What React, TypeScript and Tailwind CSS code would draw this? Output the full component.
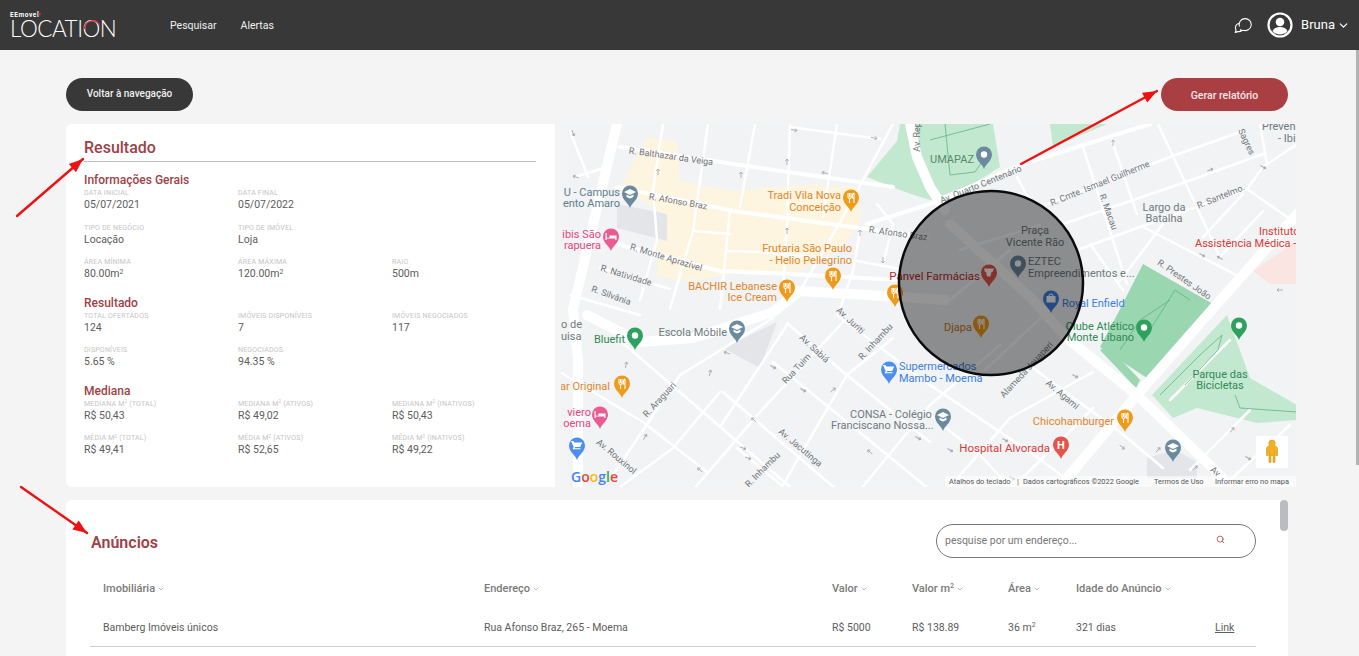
import { ChevronDown, Search } from "lucide-react";

// ---------- Map data (screen coordinates, the svg viewBox starts at 561,124) ----------

const YELLOW =
  "647,137 677,141 680,181 733,191 810,184 860,187 860,221 843,247 800,271 733,274 693,281 657,277 657,207 620,191 627,174";

const GREENS = [
  "1143,264 1213,304 1210,305 1147,378 1100,347 1117,315",
  "1100,350 1108,346 1140,380 1136,388",
];
const LIGHT_GREENS = [
  "930,124 993,124 1000,167 973,184 930,200 905,192 867,177 897,141 900,124",
  "1050,124 1107,124 1053,147",
  "1227,315 1250,378 1297,405 1297,420 1257,423 1197,408 1173,418 1152,395",
];
const BLOCKS = [
  "617,204 667,214 667,241 617,228",
  "723,348 777,322 760,368",
  "1147,458 1175,450 1197,462 1197,478 1147,478",
];

const THICK = [
  "617,124 573,309 578,360 578,487",
  "910,124 917,157 930,187 945,210",
  "587,315 640,342 693,338 773,312 800,291 900,297 945,300",
  "1297,214 1217,304 1137,395 1067,478",
  "950,224 1030,297 1067,338 1137,395 1223,478",
];
const MEDIUM = [
  "1150,124 1023,164 930,204 867,224",
  "617,187 733,211 927,237",
  "620,147 747,166 893,187",
  "617,244 720,271 790,274 900,280",
];
const THIN = [
  "663,124 653,190 657,240 640,300",
  "708,124 693,231 670,309",
  "570,131 588,177",
  "575,177 607,167",
  "755,124 740,207",
  "790,124 787,224 783,290",
  "837,124 823,217",
  "893,124 843,217 800,291",
  "730,211 720,309",
  "693,231 730,234",
  "727,251 760,252 857,261 900,269",
  "600,268 670,289",
  "570,295 640,315",
  "860,231 853,271 840,309",
  "877,204 893,224 883,264",
  "790,127 880,139",
  "1047,204 1170,157 1240,132",
  "1063,224 1180,184 1263,154",
  "1080,249 1140,227 1247,189 1263,167",
  "1083,147 1127,284",
  "1112,141 1137,214",
  "1158,124 1220,257",
  "1017,177 1030,201",
  "1247,189 1297,224",
  "1263,167 1297,144",
  "1260,124 1267,164",
  "1143,227 1240,277",
  "1163,224 1120,281",
  "1243,194 1203,237",
  "1263,211 1220,257",
  "1090,244 1123,290",
  "617,338 703,412 790,487",
  "560,372 643,422 707,472",
  "773,362 847,422 930,490",
  "787,323 843,372 930,442",
  "837,315 930,385 1030,452 1077,487",
  "723,392 837,490",
  "1033,368 1120,432 1163,468",
  "930,415 980,455 1013,490",
  "737,448 787,490",
  "613,475 680,375 773,318",
  "620,487 673,448 720,392",
  "720,427 787,325",
  "693,490 760,412 843,322",
  "780,490 847,375 893,338",
  "860,490 930,405 1000,345",
  "947,490 1010,418 1093,372",
  "1010,490 1063,438 1093,408",
  "960,250 1040,225",
  "950,300 1010,250",
  "985,370 1060,300",
  "1170,400 1230,340",
  "1190,470 1250,410",
  "1230,480 1290,425",
];
const TRAILS = [
  "930,140 960,132 990,124",
  "945,124 950,175 975,172 990,150",
  "1120,350 1140,320 1170,300",
  "1150,330 1175,290 1190,300",
  "1160,395 1200,355 1222,335 1218,350 1185,385",
  "1235,395 1240,408 1297,412",
];
const ONE_WAYS: [number, number, number][] = [
  [573, 133, 70], [576, 177, 200], [658, 172, 270], [741, 175, 270], [787, 162, 270],
  [825, 173, 190], [794, 130, 10], [874, 138, 10], [787, 231, 270], [860, 233, 270],
  [883, 260, 90], [1113, 143, 270], [1210, 170, 340], [1263, 167, 30], [1202, 255, 30],
  [1220, 258, 210], [1280, 290, 180], [626, 365, 280], [727, 353, 200], [773, 367, 30],
  [803, 390, 30], [833, 390, 320], [710, 373, 280], [754, 420, 220], [743, 448, 20],
  [748, 458, 20], [645, 437, 300], [700, 470, 220], [1005, 440, 30], [1075, 376, 30],
  [1122, 447, 40], [1158, 450, 310], [1195, 468, 320], [1232, 430, 310], [1248, 458, 30],
  [918, 438, 30], [870, 452, 220], [950, 450, 30], [1012, 478, 30],
];

type Label = { t: string; x: number; y: number; c: string; a?: "start" | "middle" | "end"; s?: number; r?: number };

const ORANGE = "#e0862b";
const STREET = "#6f7479";
const GRAY = "#70797f";
const GREEN = "#2f8a55";
const PINK = "#e8457f";
const BLUE = "#3b7de0";
const RED = "#d93a34";

const LABELS: Label[] = [
  { t: "Tradi Vila Nova", x: 841, y: 196, c: ORANGE, a: "end" },
  { t: "Conceição", x: 841, y: 208, c: ORANGE, a: "end" },
  { t: "U - Campus", x: 620, y: 193, c: "#5f7d8e", a: "end" },
  { t: "ento Amaro", x: 620, y: 204, c: "#5f7d8e", a: "end" },
  { t: "ibis São", x: 601, y: 235, c: PINK, a: "end" },
  { t: "rapuera", x: 601, y: 246, c: PINK, a: "end" },
  { t: "Frutaria São Paulo", x: 852, y: 249, c: ORANGE, a: "end" },
  { t: "- Helio Pellegrino", x: 852, y: 261, c: ORANGE, a: "end" },
  { t: "BACHIR Lebanese", x: 777, y: 287, c: ORANGE, a: "end" },
  { t: "Ice Cream", x: 777, y: 298, c: ORANGE, a: "end" },
  { t: "UMAPAZ", x: 974, y: 160, c: "#5a8a6a", a: "end" },
  { t: "Panvel Farmácias", x: 980, y: 277, c: "#c0272d", a: "end", s: 11.5 },
  { t: "Praça", x: 1035, y: 231, c: GRAY, a: "middle" },
  { t: "Vicente Rão", x: 1035, y: 243, c: GRAY, a: "middle" },
  { t: "EZTEC", x: 1028, y: 262, c: GRAY },
  { t: "Empreendimentos e...", x: 1028, y: 274, c: GRAY },
  { t: "Royal Enfield", x: 1062, y: 304, c: BLUE },
  { t: "Clube Atlético", x: 1134, y: 327, c: GREEN, a: "end" },
  { t: "Monte Líbano", x: 1134, y: 338, c: GREEN, a: "end" },
  { t: "Djapa", x: 972, y: 328, c: "#c8761f", a: "end" },
  { t: "Bluefit", x: 625, y: 340, c: GREEN, a: "end" },
  { t: "Escola Móbile", x: 727, y: 333, c: GRAY, a: "end" },
  { t: "o de", x: 561, y: 325, c: GRAY },
  { t: "uisa", x: 561, y: 337, c: GRAY },
  { t: "ar Original", x: 610, y: 387, c: ORANGE, a: "end" },
  { t: "viero", x: 591, y: 413, c: PINK, a: "end" },
  { t: "oema", x: 591, y: 424, c: PINK, a: "end" },
  { t: "Supermercados", x: 899, y: 367, c: BLUE },
  { t: "Mambo - Moema", x: 899, y: 379, c: BLUE },
  { t: "CONSA - Colégio", x: 850, y: 415, c: GRAY },
  { t: "Franciscano Nossa...", x: 831, y: 426, c: GRAY },
  { t: "Chicohamburger", x: 1114, y: 422, c: ORANGE, a: "end" },
  { t: "Hospital Alvorada", x: 1050, y: 449, c: RED, a: "end", s: 11.5 },
  { t: "Parque das", x: 1220, y: 375, c: GREEN, a: "middle" },
  { t: "Bicicletas", x: 1220, y: 386, c: GREEN, a: "middle" },
  { t: "Largo da", x: 1164, y: 208, c: GRAY, a: "middle" },
  { t: "Batalha", x: 1164, y: 219, c: GRAY, a: "middle" },
  { t: "Instituto", x: 1259, y: 232, c: RED },
  { t: "Assistência Médica -", x: 1195, y: 244, c: RED },
  { t: "Preven", x: 1262, y: 127, c: GRAY },
  { t: "- Ibi", x: 1278, y: 139, c: GRAY },
  // street names
  { t: "R. Balthazar da Veiga", x: 671, y: 157, c: STREET, a: "middle", s: 9, r: 8 },
  { t: "R. Afonso Braz", x: 678, y: 202, c: STREET, a: "middle", s: 9, r: 10 },
  { t: "R. Afonso Braz", x: 898, y: 234, c: STREET, a: "middle", s: 9, r: 8 },
  { t: "R. Monte Aprazível", x: 666, y: 258, c: STREET, a: "middle", s: 9, r: 17 },
  { t: "R. Natividade", x: 626, y: 276, c: STREET, a: "middle", s: 9, r: 17 },
  { t: "R. Silvânia", x: 611, y: 296, c: STREET, a: "middle", s: 9, r: 20 },
  { t: "Av. Rep", x: 918, y: 137, c: STREET, a: "middle", s: 9, r: -90 },
  { t: "Av. Quarto Centenário", x: 981, y: 185, c: STREET, a: "middle", s: 9, r: -22 },
  { t: "R. Cmte. Ismael Guilherme", x: 1100, y: 184, c: STREET, a: "middle", s: 9, r: -22 },
  { t: "Sagres", x: 1246, y: 142, c: STREET, a: "middle", s: 9, r: 65 },
  { t: "R. Macau", x: 1108, y: 212, c: STREET, a: "middle", s: 9, r: 70 },
  { t: "R. Santelmo.", x: 1221, y: 197, c: STREET, a: "middle", s: 9, r: -22 },
  { t: "R. Prestes João", x: 1184, y: 280, c: STREET, a: "middle", s: 9, r: 35 },
  { t: "Av. Juriti", x: 850, y: 321, c: STREET, a: "middle", s: 9, r: 43 },
  { t: "R. Inhambu", x: 876, y: 342, c: STREET, a: "middle", s: 9, r: -47 },
  { t: "Av. Sabiá", x: 814, y: 349, c: STREET, a: "middle", s: 9, r: 43 },
  { t: "Rua Tuim", x: 797, y: 369, c: STREET, a: "middle", s: 9, r: -47 },
  { t: "R. Araguari", x: 660, y: 400, c: STREET, a: "middle", s: 9, r: -47 },
  { t: "Av. Rouxinol", x: 616, y: 457, c: STREET, a: "middle", s: 9, r: 40 },
  { t: "Av. Jacutinga", x: 800, y: 448, c: STREET, a: "middle", s: 9, r: 40 },
  { t: "R. Inhambu", x: 763, y: 470, c: STREET, a: "middle", s: 9, r: -45 },
  { t: "Alameda Jauaperi", x: 1027, y: 370, c: STREET, a: "middle", s: 9, r: -47 },
  { t: "Av. Agami", x: 1062, y: 395, c: STREET, a: "middle", s: 9, r: 40 },
  { t: "Av", x: 1215, y: 472, c: STREET, a: "middle", s: 9, r: 40 },
];

type Glyph = "dot" | "fork" | "cap" | "bed" | "cart" | "bag" | "h" | "cup";

const PINS: { x: number; y: number; c: string; g: Glyph }[] = [
  { x: 851, y: 212, c: "#f09a1a", g: "fork" },
  { x: 984, y: 169, c: "#6b8a9e", g: "dot" },
  { x: 630, y: 208, c: "#6b8a9e", g: "cap" },
  { x: 611, y: 251, c: "#ec5a92", g: "bed" },
  { x: 833, y: 290, c: "#f09a1a", g: "fork" },
  { x: 787, y: 302, c: "#f09a1a", g: "fork" },
  { x: 895, y: 307, c: "#f09a1a", g: "fork" },
  { x: 989, y: 287, c: "#e5534b", g: "cup" },
  { x: 1018, y: 278, c: "#6b8a9e", g: "dot" },
  { x: 1051, y: 313, c: "#3f7fe6", g: "bag" },
  { x: 1144, y: 342, c: "#2ea15e", g: "dot" },
  { x: 1239, y: 340, c: "#2ea15e", g: "dot" },
  { x: 981, y: 338, c: "#f09a1a", g: "fork" },
  { x: 635, y: 350, c: "#2ea15e", g: "dot" },
  { x: 737, y: 343, c: "#6b8a9e", g: "cap" },
  { x: 622, y: 398, c: "#f09a1a", g: "fork" },
  { x: 600, y: 429, c: "#ec5a92", g: "bed" },
  { x: 577, y: 460, c: "#4d8fee", g: "cart" },
  { x: 889, y: 384, c: "#4d8fee", g: "cart" },
  { x: 943, y: 431, c: "#6b8a9e", g: "cap" },
  { x: 1125, y: 432, c: "#f09a1a", g: "fork" },
  { x: 1061, y: 459, c: "#e5534b", g: "h" },
  { x: 1173, y: 462, c: "#6b8a9e", g: "cap" },
];

// ---------- Map pieces ----------

function PinGlyph({ g }: { g: Glyph }) {
  if (g === "dot") return <circle cx="0" cy="-14.5" r="3.2" fill="#fff" />;
  if (g === "fork")
    return (
      <path
        d="M-3 -19v4a1.5 1.5 0 0 0 1.5 1.5V-9M-1.5 -19v4M0 -19v4a1.5 1.5 0 0 1 -1.5 1.5M3 -19c-1.5 .5 -1.8 3 -1.8 5H3M3 -19V-9"
        fill="none"
        stroke="#fff"
        strokeWidth="1.1"
      />
    );
  if (g === "cap") return <path d="M0 -19l6 3 -6 3 -6 -3zM-3.5 -13.5v2.5l3.5 1.5 3.5 -1.5v-2.5l-3.5 1.7z" fill="#fff" />;
  if (g === "bed") return <path d="M-5.5 -18v7h1.2v-1.6h8.6V-11h1.2v-4.5h-7v2.2h-2.8V-18z" fill="#fff" />;
  if (g === "cart")
    return <path d="M-5.5 -19h2l.7 1.6h8l-2 4.4h-5l-.7 1.2h6v1.1h-8l1.2 -2.3 -2.3 -4.9h-1z" fill="#fff" />;
  if (g === "bag") return <path d="M-4.5 -17h9v6.5h-9zM-2.5 -17a2.5 2.5 0 0 1 5 0h-1a1.5 1.5 0 0 0 -3 0z" fill="#fff" />;
  if (g === "cup") return <path d="M-5 -18.5h10l-1.5 3.5h-1l-1 4.5h-3.5l-1 -4.5h-1z" fill="#fff" />;
  return (
    <text x="0" y="-10.5" textAnchor="middle" fontSize="11" fontWeight="700" fill="#fff">
      H
    </text>
  );
}

function MapView() {
  return (
    <div className="relative h-[363px] w-[735px] shrink-0 overflow-hidden bg-[#f1f3f4]">
      <svg viewBox="561 124 735 363" className="h-full w-full [font-family:Roboto,sans-serif]">
        <polygon points={YELLOW} fill="#fdf5e0" />
        {GREENS.map((p) => (
          <polygon key={p} points={p} fill="#9ad6b0" />
        ))}
        {LIGHT_GREENS.map((p) => (
          <polygon key={p} points={p} fill="#c3e8d0" />
        ))}
        {/* hospital area */}
        <polygon points="1253,271 1297,241 1297,284 1270,284" fill="#fbe5e3" />
        {BLOCKS.map((p) => (
          <polygon key={p} points={p} fill="#e3e5e9" />
        ))}
        <g fill="none" stroke="#fff" strokeLinejoin="round" strokeLinecap="round">
          {THIN.map((p) => (
            <polyline key={p} points={p} strokeWidth="2.5" />
          ))}
          {MEDIUM.map((p) => (
            <polyline key={p} points={p} strokeWidth="4" />
          ))}
          {THICK.map((p) => (
            <polyline key={p} points={p} strokeWidth="10" />
          ))}
        </g>
        <g fill="none" stroke="#5cb585" strokeWidth="0.8">
          {TRAILS.map((p) => (
            <polyline key={p} points={p} />
          ))}
        </g>
        {ONE_WAYS.map(([x, y, r]) => (
          <path
            key={`${x}-${y}`}
            d="M-3 0h6M1 -1.7L3 0 1 1.7"
            transform={`translate(${x} ${y}) rotate(${r})`}
            fill="none"
            stroke="#a7acb1"
            strokeWidth="0.9"
          />
        ))}
        {LABELS.map((l) => (
          <text
            key={`${l.t}-${l.x}`}
            x={l.x}
            y={l.y}
            fill={l.c}
            fontSize={l.s ?? 11}
            textAnchor={l.a ?? "start"}
            dominantBaseline="middle"
            transform={l.r ? `rotate(${l.r} ${l.x} ${l.y})` : undefined}
          >
            {l.t}
          </text>
        ))}
        {PINS.map((p) => (
          <g key={`${p.x}-${p.y}`} transform={`translate(${p.x} ${p.y})`}>
            <path d="M0 0C-1.5 -5 -8 -8 -8 -14.5A8 8 0 1 1 8 -14.5C8 -8 1.5 -5 0 0Z" fill={p.c} />
            <PinGlyph g={p.g} />
          </g>
        ))}
        {/* search radius */}
        <circle cx="991" cy="283" r="92" fill="#000" fillOpacity="0.42" stroke="#0b0b0b" strokeWidth="2.5" />
        {/* google logo */}
        <text x="571" y="482" fontSize="14" fontWeight="600" className="[font-family:'Open_Sans',sans-serif]">
          <tspan fill="#4285f4">G</tspan>
          <tspan fill="#ea4335">o</tspan>
          <tspan fill="#fbbc05">o</tspan>
          <tspan fill="#4285f4">g</tspan>
          <tspan fill="#34a853">l</tspan>
          <tspan fill="#ea4335">e</tspan>
        </text>
        {/* attribution strip */}
        <rect x="945" y="476" width="351" height="11" fill="#fff" fillOpacity="0.55" />
        <g fontSize="7.4" fill="#555" dominantBaseline="middle">
          <text x="949" y="482">Atalhos do teclado</text>
          <text x="1017" y="482">|</text>
          <text x="1023" y="482">Dados cartográficos ©2022 Google</text>
          <text x="1154" y="482">Termos de Uso</text>
          <text x="1215" y="482">Informar erro no mapa</text>
        </g>
        {/* street view */}
        <rect x="1256" y="436" width="32" height="32" fill="#fff" />
        <path
          d="M1272 440a3.2 3.2 0 0 1 3.2 3.2c0 1 -.4 1.800 -1 2.300 2 .4 3.300 1.500 3.300 3.500v6.500h-1.800v-4h-.7v11h-2v-7h-2v7h-2v-11h-.7v4h-1.800v-6.500c0 -2 1.300 -3.100 3.300 -3.500 -.6 -.5 -1 -1.300 -1 -2.300a3.200 3.200 0 0 1 3.200 -3.200z"
          fill="#f5b01e"
          stroke="#c98a10"
          strokeWidth="0.5"
        />
      </svg>
    </div>
  );
}

// ---------- Result panel ----------

function Field({ label, value }: { label: React.ReactNode; value: React.ReactNode }) {
  return (
    <div>
      <div className="h-[10px] text-[7px] leading-[10px] tracking-[0.2px] text-[#c4c4c4] uppercase">{label}</div>
      <div className="h-[14px] text-[10.5px] leading-[14px] text-[#5c5c5c]">{value}</div>
    </div>
  );
}

function Sup() {
  return <sup className="text-[0.65em] leading-none">2</sup>;
}

function ResultPanel() {
  return (
    <div className="h-[363px] w-[489px] shrink-0 rounded-l-[6px] bg-white pt-[14px] pr-[19px] pl-[18px]">
      <h2 className="h-[20px] text-[16px] leading-[20px] font-medium text-[#9d4246]">Resultado</h2>
      <div className="mt-[3px] border-b border-[#bdbdbd]" />

      <h3 className="mt-[11px] h-[15px] text-[12px] leading-[15px] font-medium text-[#9d4246]">Informações Gerais</h3>
      <div className="grid grid-cols-[154px_154px_1fr] gap-y-[10.5px]">
        <Field label="Data inicial" value="05/07/2021" />
        <Field label="Data final" value="05/07/2022" />
        <div />
        <Field label="Tipo de negócio" value="Locação" />
        <Field label="Tipo de imóvel" value="Loja" />
        <div />
        <Field label="Área mínima" value={<>80.00m<Sup /></>} />
        <Field label="Área máxima" value={<>120.00m<Sup /></>} />
        <Field label="Raio" value="500m" />
      </div>

      <h3 className="mt-[14.5px] h-[15px] text-[12px] leading-[15px] font-medium text-[#9d4246]">Resultado</h3>
      <div className="grid grid-cols-[154px_154px_1fr] gap-y-[10.5px]">
        <Field label="Total ofertados" value="124" />
        <Field label="Imóveis disponíveis" value="7" />
        <Field label="Imóveis negociados" value="117" />
        <Field label="Disponíveis" value="5.65 %" />
        <Field label="Negociados" value="94.35 %" />
      </div>

      <h3 className="mt-[14.5px] h-[15px] text-[12px] leading-[15px] font-medium text-[#9d4246]">Mediana</h3>
      <div className="grid grid-cols-[154px_154px_1fr] gap-y-[10.5px]">
        <Field label={<>Mediana m<Sup /> (total)</>} value="R$ 50,43" />
        <Field label={<>Mediana m<Sup /> (ativos)</>} value="R$ 49,02" />
        <Field label={<>Mediana m<Sup /> (inativos)</>} value="R$ 50,43" />
        <Field label={<>Média m<Sup /> (total)</>} value="R$ 49,41" />
        <Field label={<>Média m<Sup /> (ativos)</>} value="R$ 52,65" />
        <Field label={<>Média m<Sup /> (inativos)</>} value="R$ 49,22" />
      </div>
    </div>
  );
}

// ---------- Listings table ----------

const COLUMNS = "grid grid-cols-[381px_348px_80px_96px_68px_139px_1fr] items-center px-[13px]";

function Head({ children }: { children: React.ReactNode }) {
  return (
    <div className="flex items-center gap-[2px] text-[11px] font-medium text-[#7a7a7a]">
      <span>{children}</span>
      <ChevronDown size={8} strokeWidth={2} className="text-[#9a9a9a]" />
    </div>
  );
}

function Listings() {
  return (
    <div className="relative mt-[13px] h-[300px] w-[1222px] rounded-t-[6px] bg-white pt-[24px] pr-[32px] pl-[24px]">
      <div className="flex h-[34px] items-center justify-between">
        <h2 className="mt-[4px] ml-[1px] text-[16px] font-semibold text-[#9d4246]">Anúncios</h2>
        <div className="flex h-[34px] w-[320px] items-center justify-between rounded-full border border-[#777] pr-[30px] pl-[8px]">
          <span className="text-[10.5px] text-[#777]">pesquise por um endereço...</span>
          <Search size={9} strokeWidth={2} className="mb-[3px] text-[#a0393e]" />
        </div>
      </div>

      <div className={`${COLUMNS} mt-[21px] h-[20px]`}>
        <Head>Imobiliária</Head>
        <Head>Endereço</Head>
        <Head>Valor</Head>
        <Head>
          Valor m<Sup />
        </Head>
        <Head>Área</Head>
        <Head>Idade do Anúncio</Head>
        <div />
      </div>

      <div className={`${COLUMNS} mt-[19px] h-[19px] text-[10.5px] text-[#5c5c5c]`}>
        <span>Bamberg Imóveis únicos</span>
        <span>Rua Afonso Braz, 265 - Moema</span>
        <span>R$ 5000</span>
        <span>R$ 138.89</span>
        <span>
          36 m<Sup />
        </span>
        <span>321 dias</span>
        <span className="underline">Link</span>
      </div>
      <div className="mt-[9px] w-[1166px] border-b border-[#cfcfcf]" />

      {/* inner scrollbar */}
      <div className="absolute top-0 right-0 h-[31px] w-[8px] rounded-full bg-[#b9bcc0]" />
    </div>
  );
}

// ---------- Header ----------

function Logo() {
  return (
    <div className="relative h-[50px] w-[105px] text-white">
      <span className="absolute top-[11px] left-0 text-[6.5px] leading-[8px] font-bold tracking-[0.6px]">EEmovel</span>
      <span className="absolute top-[19px] left-0 text-[22.5px] leading-[20px] font-light tracking-[-0.5px] whitespace-nowrap [font-family:Lato,sans-serif]">
        LOCATION
      </span>
      <svg viewBox="0 0 105 50" className="absolute inset-0 h-[50px] w-[105px]">
        <path d="M74.500 29A8 8 0 0 1 89.500 25" fill="none" stroke="#d2393c" strokeWidth="1.4" />
        <circle cx="29.500" cy="14" r="1.300" fill="#b53a3d" />
      </svg>
    </div>
  );
}

function ChatIcon() {
  return (
    <svg viewBox="0 0 18 18" width="18" height="18" fill="none" stroke="#fff" strokeWidth="1.1" strokeLinejoin="round">
      <path d="M5.500 10.500a6 6 0 1 1 3.500 3.700c-1 .1 -1.500 .3 -2 .8 .1 -.8 -.1 -1.300 -.5 -1.800" />
      <path d="M5 7.500a4 4 0 0 0 -3.500 4.500c0 .8 .3 1.500 .5 2 0 .8 -.3 1.500 -.8 2.500 1.200 -.2 2 -.6 2.800 -1 .8 .2 2.500 0 3.500 -1" />
    </svg>
  );
}

function UserIcon() {
  return (
    <svg viewBox="0 0 26 26" width="26" height="26">
      <circle cx="13" cy="13" r="11.500" fill="none" stroke="#fff" strokeWidth="2.200" />
      <circle cx="13" cy="10" r="4.300" fill="#fff" />
      <path d="M5.500 19.300c1 -3 4 -4.300 7.500 -4.300s6.500 1.300 7.500 4.300a10.500 10.500 0 0 1 -15 0z" fill="#fff" />
    </svg>
  );
}

function Header() {
  return (
    <header className="flex h-[50px] items-center bg-[#383838] pr-[9px] pl-[10px] text-white">
      <Logo />
      <nav className="mt-[1px] ml-[55px] flex gap-[24px] text-[10.5px] text-[#f0f0f0]">
        <span>Pesquisar</span>
        <span>Alertas</span>
      </nav>
      <div className="ml-auto flex items-center">
        <ChatIcon />
        <div className="ml-[15px]">
          <UserIcon />
        </div>
        <span className="ml-[8px] text-[13px]">Bruna</span>
        <ChevronDown size={13} strokeWidth={2.2} className="ml-[2px]" />
      </div>
    </header>
  );
}

// ---------- Annotation arrows ----------

function Arrow({ x1, y1, x2, y2 }: { x1: number; y1: number; x2: number; y2: number }) {
  const angle = (Math.atan2(y2 - y1, x2 - x1) * 180) / Math.PI;
  return (
    <g>
      <line x1={x1} y1={y1} x2={x2} y2={y2} stroke="#ee1111" strokeWidth="2.4" strokeLinecap="round" />
      <path d="M0 0L-14 -5.500L-14 5.500Z" fill="#ee1111" transform={`translate(${x2} ${y2}) rotate(${angle})`} />
    </g>
  );
}

export default function App() {
  return (
    <div className="relative h-[656px] w-[1359px] overflow-hidden bg-[#f4f4f4] [font-family:Roboto,sans-serif]">
      <Header />
      <main className="pl-[66px]">
        <div className="flex h-[74px] w-[1222px] items-end justify-between pb-[13px]">
          <button className="h-[33px] w-[127px] rounded-full bg-[#383838] pb-[2px] text-[10px] font-medium text-[#f0f0f0]">
            Voltar à navegação
          </button>
          <button className="h-[33px] w-[127px] rounded-full bg-[#a93f42] pt-[2px] text-[10.5px] font-medium text-[#f5e6e6]">
            Gerar relatório
          </button>
        </div>
        <div className="flex gap-[6px]">
          <ResultPanel />
          <MapView />
        </div>
        <Listings />
      </main>

      {/* page scrollbar */}
      <div className="absolute top-[50px] right-0 h-[415px] w-[3px] bg-[#b3b3b3]" />

      {/* red annotations drawn over the screenshot */}
      <svg viewBox="0 0 1359 656" className="pointer-events-none absolute inset-0 h-[656px] w-[1359px]">
        <Arrow x1={17} y1={216} x2={83} y2={159} />
        <Arrow x1={1021} y1={164} x2={1157} y2={91} />
        <Arrow x1={21} y1={487} x2={87} y2={533} />
      </svg>
    </div>
  );
}
